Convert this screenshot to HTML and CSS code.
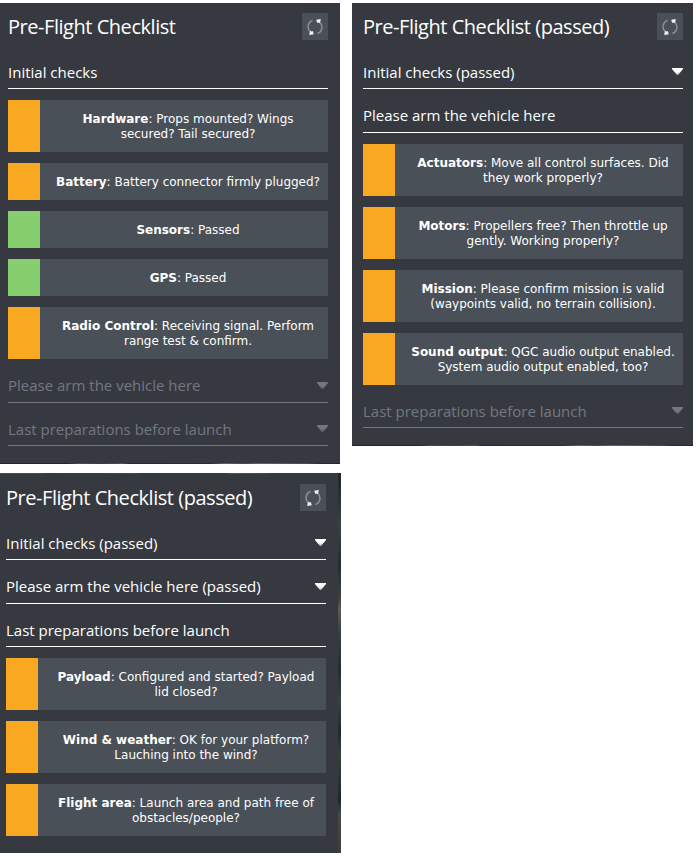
FILE: index.html
```html
<!DOCTYPE html>
<html lang="en">
<head>
<meta charset="utf-8">
<title>Pre-Flight Checklist</title>
<link rel="stylesheet" href="styles.css">
</head>
<body>
<svg class="defs" width="0" height="0">
  <symbol id="reset" viewBox="0 0 16 18">
    <path d="M5.500 2.500C.2 4.500-.2 11 3.400 13.800" fill="none" stroke="#8d9297" stroke-width="1.400"/>
    <path d="M10.500 15.500C15.800 13.500 16.200 7 12.600 4.200" fill="none" stroke="#8d9297" stroke-width="1.400"/>
    <path d="M9.200 1.800 13.800 1 13 5.200 11.500 4.500 10.200 5Z" fill="#f0f0f0"/>
    <path d="M6.800 16.200 2.200 17 3 12.800 4.500 13.500 5.800 13Z" fill="#f0f0f0"/>
  </symbol>
</svg>
<main class="board">
  <div class="column column--left">
    <section class="panel panel--initial">
      <header class="head"><h1>Pre-Flight Checklist</h1><button class="reset" aria-label="Reset"><svg><use href="#reset"/></svg></button></header>
      <div class="group group--first"><span>Initial checks</span></div>
      <div class="items">
        <div class="item"><p><b>Hardware</b>: Props mounted? Wings<br>secured? Tail secured?</p></div>
        <div class="item item--single"><p><b>Battery</b>: Battery connector firmly plugged?</p></div>
        <div class="item item--single item--passed"><p><b>Sensors</b>: Passed</p></div>
        <div class="item item--single item--passed"><p><b>GPS</b>: Passed</p></div>
        <div class="item"><p><b>Radio Control</b>: Receiving signal. Perform<br>range test &amp; confirm.</p></div>
      </div>
      <div class="group group--off"><span>Please arm the vehicle here</span><i class="arrow"></i></div>
      <div class="group group--off group--tight"><span>Last preparations before launch</span><i class="arrow"></i></div>
    </section>
    <section class="panel panel--last">
      <header class="head"><h1>Pre-Flight Checklist (passed)</h1><button class="reset" aria-label="Reset"><svg><use href="#reset"/></svg></button></header>
      <div class="group group--first"><span>Initial checks (passed)</span><i class="arrow"></i></div>
      <div class="group"><span>Please arm the vehicle here (passed)</span><i class="arrow"></i></div>
      <div class="group group--tight"><span>Last preparations before launch</span></div>
      <div class="items">
        <div class="item"><p><b>Payload</b>: Configured and started? Payload<br>lid closed?</p></div>
        <div class="item"><p><b>Wind &amp; weather</b>: OK for your platform?<br>Lauching into the wind?</p></div>
        <div class="item"><p><b>Flight area</b>: Launch area and path free of<br>obstacles/people?</p></div>
      </div>
    </section>
  </div>
  <div class="column">
    <section class="panel panel--arm">
      <header class="head"><h1>Pre-Flight Checklist (passed)</h1><button class="reset" aria-label="Reset"><svg><use href="#reset"/></svg></button></header>
      <div class="group group--first"><span>Initial checks (passed)</span><i class="arrow"></i></div>
      <div class="group"><span>Please arm the vehicle here</span></div>
      <div class="items">
        <div class="item"><p><b>Actuators</b>: Move all control surfaces. Did<br>they work properly?</p></div>
        <div class="item"><p><b>Motors</b>: Propellers free? Then throttle up<br>gently. Working properly?</p></div>
        <div class="item"><p><b>Mission</b>: Please confirm mission is valid<br>(waypoints valid, no terrain collision).</p></div>
        <div class="item"><p><b>Sound output</b>: QGC audio output enabled.<br>System audio output enabled, too?</p></div>
      </div>
      <div class="group group--off group--tight"><span>Last preparations before launch</span><i class="arrow"></i></div>
    </section>
  </div>
</main>
</body>
</html>
```
FILE: styles.css
```css
* { box-sizing: border-box; margin: 0; padding: 0; }
body { background: #fff; }
.defs { display: block; }
.board { display: flex; align-items: flex-start; gap: 11px; padding-top: 3px; }
.column { display: flex; flex-direction: column; align-items: flex-start; gap: 9px; }
.column--left { width: 341px; }
.panel {
  --edge: linear-gradient(90deg, #22252d 20%, #4e4e4c 23%, #3a3a3e 30%, #555450 36%, #24272e 38%, #2c2e33 62%, #60605c 66%, #45474a 72%, #62625e 76%, #4a4a4a 90%, #23262d 95%);
  background: #363a40; color: #fff; font-family: "Open Sans", sans-serif;
}
.panel--initial { width: 340px; height: 461px; padding: 10px 12px 0 8px; background: var(--edge) bottom / 100% 1px no-repeat, #363a40; }
.panel--arm { width: 341px; height: 443px; padding: 10px 10px 0 11px; background: var(--edge) bottom / 100% 1px no-repeat, #363a40; }
.panel--last {
  width: 341px; height: 380px; padding: 11px 15px 0 6px;
  background:
    linear-gradient(#20262d, #30343a 8%, #3c423f 14%, #252c33 24%, #3e4240 33%, #5c5d59 36%, #3a3f42 42%, #262c35 52%, #3a423e 60%, #222831 68%, #394039 74%, #20262f 86%, #484947 90%, #3a3d3b) right / 3px 100% no-repeat,
    linear-gradient(90deg, #4a4b4c 12%, #35383d 14%, #45474a 40%, #35383d 42%, #35383d 66%, #505152 68%, #45474a 78%, #35383d 80%) top / 100% 1px no-repeat,
    #363a40;
}
.head { display: flex; justify-content: space-between; height: 27px; }
.head h1 { font-size: 20px; font-weight: 400; letter-spacing: -0.46px; line-height: 27px; white-space: nowrap; }
.reset { display: flex; align-items: center; justify-content: center; width: 26px; height: 27px; border: 0; background: #4a5057; }
.reset svg { width: 16px; height: 18px; }
.group { display: flex; justify-content: space-between; align-items: flex-end; height: 44px; padding-bottom: 5px; border-bottom: 1px solid #fff; font-size: 15px; line-height: 21px; white-space: nowrap; }
.group span { margin-bottom: 1px; }
.group--first { height: 49px; }
.group--first span, .group--tight span { margin-bottom: 0; }
.group--tight { height: 43px; }
.group--off { color: #737782; border-color: #737782; }
.arrow { width: 11px; height: 7px; margin-bottom: 8px; background: linear-gradient(currentColor 55%, color-mix(in srgb, currentColor 55%, #363a40)); clip-path: polygon(0 0, 100% 0, 100% 15%, 55% 100%, 45% 100%, 0 15%); }
.items { display: flex; flex-direction: column; gap: 11px; padding-top: 11px; }
.item { display: flex; align-items: center; height: 52px; padding: 2px 0 0 8px; border-left: 32px solid #f9a822; background: #4a5057; font: 12px/15px "DejaVu Sans", sans-serif; }
.item p { flex: 1; text-align: center; white-space: nowrap; }
.item--single { height: 37px; }
.item--passed { border-left-color: #87cf6e; }
```
